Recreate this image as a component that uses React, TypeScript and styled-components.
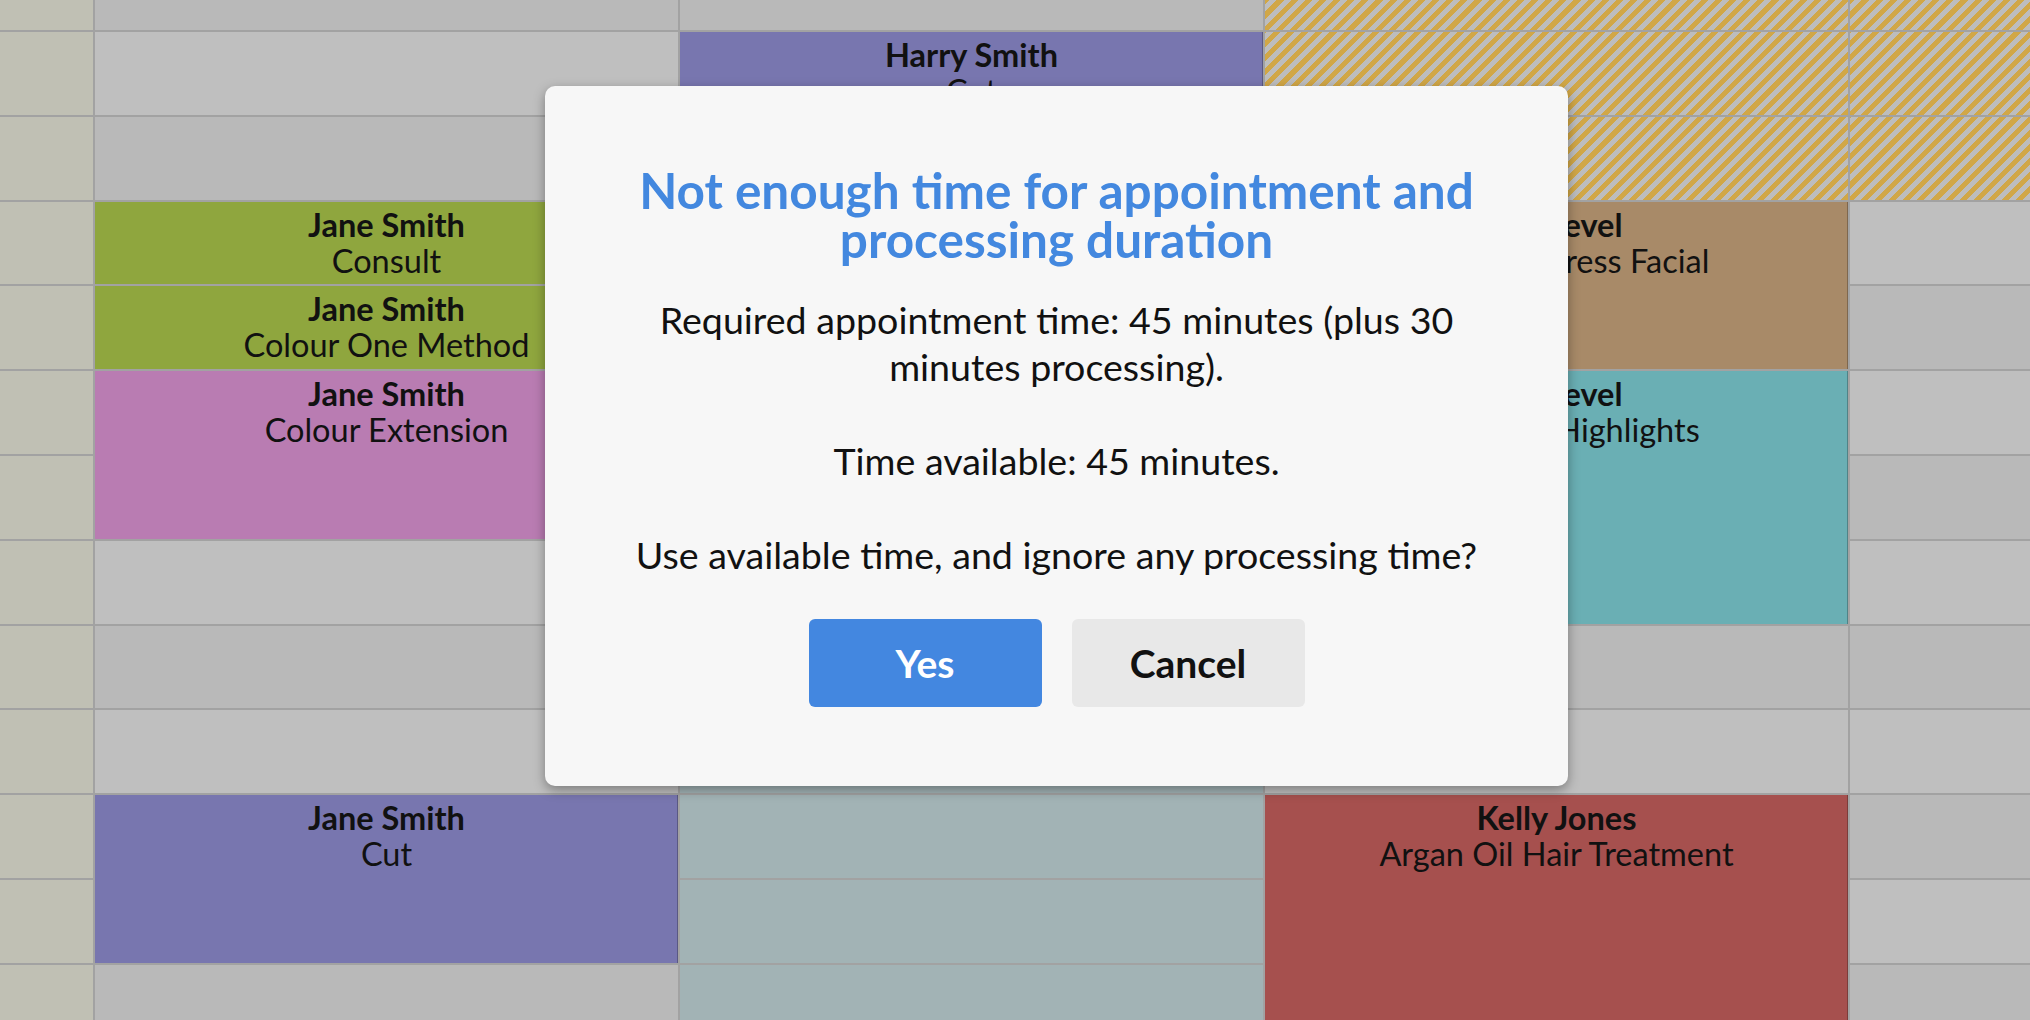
import React from 'react'
import styled, {createGlobalStyle, css} from 'styled-components'

const GlobalStyle = createGlobalStyle`
    html, body {
        margin: 0;
        padding: 0;
        background: #a2a2a2;
        font-family: Lato, 'Open Sans', sans-serif;
        overflow: hidden;
    }
`

const ROWS = 13
const LINE = '#a2a2a2'

type Tone = 'green' | 'pink' | 'purple' | 'tan' | 'teal' | 'red'

const tones: Record<Tone, string> = {
    green: '#8fa63e',
    pink: '#b97cb2',
    purple: '#7876af',
    tan: '#a88a68',
    teal: '#6aafb4',
    red: '#a6504e',
}

type Appointment = {
    col: number
    row: number
    span: number
    tone: Tone
    client: string
    service: string
}

const appointments: Appointment[] = [
    {col: 1, row: 3, span: 1, tone: 'green', client: 'Jane Smith', service: 'Consult'},
    {col: 1, row: 4, span: 1, tone: 'green', client: 'Jane Smith', service: 'Colour One Method'},
    {col: 1, row: 5, span: 2, tone: 'pink', client: 'Jane Smith', service: 'Colour Extension'},
    {col: 1, row: 10, span: 2, tone: 'purple', client: 'Jane Smith', service: 'Cut'},
    {col: 2, row: 1, span: 2, tone: 'purple', client: 'Harry Smith', service: 'Cut'},
    {col: 3, row: 3, span: 2, tone: 'tan', client: 'Jen Level', service: 'Deluxe Express Facial'},
    {col: 3, row: 5, span: 3, tone: 'teal', client: 'Jen Level', service: 'Full Head Highlights'},
    {col: 3, row: 10, span: 3, tone: 'red', client: 'Kelly Jones', service: 'Argan Oil Hair Treatment'},
]

// staff not working (hatched) and rostered-off (blue grey) slots
const isHatched = (col: number, row: number) => (col === 3 || col === 4) && row <= 2
const isBlocked = (col: number, row: number) => col === 2 && row >= 9

type SlotKind = 'light' | 'dark' | 'hatched' | 'blocked'

const Page = styled.div`
    position: relative;
    width: 2030px;
    height: 1020px;
    overflow: hidden;
`

const Schedule = styled.div`
    display: grid;
    grid-template-columns: 93px repeat(4, 583px);
    grid-template-rows: repeat(${ROWS}, 82.8px);
    column-gap: 2px;
    row-gap: 2px;
    margin-top: -52.8px;
    background: ${LINE};
`

const TimeCell = styled.div<{$row: number}>`
    grid-column: 1;
    grid-row: ${(p) => p.$row + 1};
    background: #c0c0b4;
`

const Slot = styled.div<{$col: number; $row: number; $kind: SlotKind}>`
    grid-column: ${(p) => p.$col + 1};
    grid-row: ${(p) => p.$row + 1};
    ${(p) => {
        switch (p.$kind) {
            case 'hatched':
                return css`
                    background: repeating-linear-gradient(
                        -45deg,
                        #d1a747 0 5px,
                        #bdbdbd 5px 10px
                    );
                `
            case 'blocked':
                return css`
                    background: #a2b3b5;
                `
            case 'light':
                return css`
                    background: #bfbfbf;
                `
            default:
                return css`
                    background: #b9b9b9;
                `
        }
    }}
`

const Booking = styled.div<{$col: number; $row: number; $span: number; $tone: Tone}>`
    grid-column: ${(p) => p.$col + 1};
    grid-row: ${(p) => p.$row + 1} / span ${(p) => p.$span};
    background: ${(p) => tones[p.$tone]};
    box-shadow: inset -1px 0 0 rgba(0, 0, 0, 0.25);
    display: flex;
    flex-direction: column;
    align-items: center;
    padding-top: 5px;
    font-size: 32.5px;
    line-height: 36px;
    color: #111;
    text-align: center;
`

const Client = styled.div`
    font-weight: 700;
`

const Service = styled.div`
    font-weight: 400;
`

const Dialog = styled.div`
    position: absolute;
    left: 545px;
    top: 86px;
    width: 1023px;
    box-sizing: border-box;
    padding: 80px 60px 79px;
    background: #f7f7f7;
    border-radius: 10px;
    box-shadow: 0 4px 12px rgba(0, 0, 0, 0.35);
    display: flex;
    flex-direction: column;
    align-items: center;
    text-align: center;
`

const Title = styled.h2`
    margin: 0 0 32px;
    max-width: 880px;
    font-size: 49.5px;
    line-height: 49px;
    font-weight: 700;
    color: #4388df;
`

const Message = styled.p`
    margin: 0;
    max-width: 880px;
    font-size: 37.6px;
    line-height: 47px;
    color: #111;
`

const Actions = styled.div`
    display: flex;
    gap: 30px;
    margin-top: 41px;
`

const Button = styled.button<{$primary?: boolean}>`
    width: 233px;
    height: 88px;
    border: none;
    border-radius: 6px;
    font-family: Lato, sans-serif;
    font-size: 39px;
    font-weight: 700;
    cursor: pointer;
    background: ${(p) => (p.$primary ? '#4387e0' : '#e8e8e8')};
    color: ${(p) => (p.$primary ? '#fff' : '#111')};
`

const slotKind = (col: number, row: number): SlotKind => {
    if (isHatched(col, row)) return 'hatched'
    if (isBlocked(col, row)) return 'blocked'
    return row % 2 === 1 ? 'light' : 'dark'
}

const covered = (col: number, row: number) =>
    appointments.some((a) => a.col === col && row >= a.row && row < a.row + a.span)

const App = () => {
    const rows = Array.from({length: ROWS}, (_, i) => i)
    const cols = [1, 2, 3, 4]

    return (
        <Page>
            <GlobalStyle />
            <Schedule>
                {rows.map((row) => (
                    <TimeCell key={`t${row}`} $row={row} />
                ))}
                {rows.flatMap((row) =>
                    cols
                        .filter((col) => !covered(col, row))
                        .map((col) => (
                            <Slot key={`s${col}-${row}`} $col={col} $row={row} $kind={slotKind(col, row)} />
                        )),
                )}
                {appointments.map((a) => (
                    <Booking
                        key={`${a.col}-${a.row}`}
                        $col={a.col}
                        $row={a.row}
                        $span={a.span}
                        $tone={a.tone}
                    >
                        <Client>{a.client}</Client>
                        <Service>{a.service}</Service>
                    </Booking>
                ))}
            </Schedule>
            <Dialog>
                <Title>Not enough time for appointment and processing duration</Title>
                <Message>
                    Required appointment time: 45 minutes (plus 30 minutes processing).
                    <br />
                    <br />
                    Time available: 45 minutes.
                    <br />
                    <br />
                    Use available time, and ignore any processing time?
                </Message>
                <Actions>
                    <Button $primary>Yes</Button>
                    <Button>Cancel</Button>
                </Actions>
            </Dialog>
        </Page>
    )
}

App.displayName = 'App'
export default App
